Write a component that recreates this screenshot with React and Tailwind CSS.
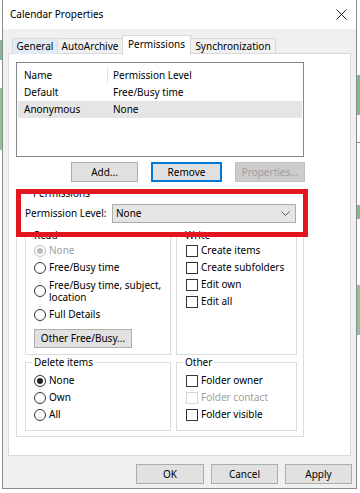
import React from 'react';

const Radio = ({ label, checked, disabled }) => (
    <div className="flex items-center h-[17px] pl-[8px]">
        <span
            className={`w-[12px] h-[12px] rounded-full border flex items-center justify-center bg-white ${disabled ? "border-[#bcbcbc]" : "border-[#333333]"}`}
        >
            {(checked || disabled) && (
                <span className={`w-[6px] h-[6px] rounded-full ${disabled ? "bg-[#bcbcbc]" : "bg-[#222222]"}`} />
            )}
        </span>
        <span className={`ml-[3px] ${disabled ? "text-[#a0a0a0]" : "text-black"}`}>{label}</span>
    </div>
);

const Check = ({ label, disabled }) => (
    <div className="flex items-center h-[17px] pl-[9px]">
        <span className={`w-[12px] h-[12px] border bg-white ${disabled ? "border-[#d6d6d6]" : "border-[#333333]"}`} />
        <span className={`ml-[3px] ${disabled ? "text-[#a0a0a0]" : "text-black"}`}>{label}</span>
    </div>
);

const Group = ({ title, className, children }) => (
    <fieldset className={`border border-[#dcdcdc] ${className}`}>
        <legend className="ml-[6px] px-[2px] leading-[14px]">{title}</legend>
        {children}
    </fieldset>
);

const Button = ({ label, width, focused, disabled }) => (
    <div
        className={`h-[20px] flex items-center justify-center ${width} ${
            focused
                ? "bg-[#e1e1e1] border-2 border-[#0078d7]"
                : disabled
                    ? "bg-[#cccccc] border border-[#bfbfbf] text-[#a0a0a0]"
                    : "bg-[#e1e1e1] border border-[#adadad]"
        }`}
    >
        {label}
    </div>
);

const SideStrip = ({ marks }) => (
    <div className="w-[3px] flex flex-col bg-white">
        {marks.map(([h, color], i) => (
            <div key={i} className={`${h} ${color}`} />
        ))}
    </div>
);

const App = () => {
    return (
        <div className="relative w-[360px] h-[493px] bg-white flex overflow-hidden font-['Noto_Sans',sans-serif] text-[10px] text-black">
            <SideStrip
                marks={[
                    ["h-[40px]", "bg-white"],
                    ["h-[20px]", "bg-[#7fb98f]"],
                    ["h-[28px]", "bg-white"],
                    ["h-[62px]", "bg-[#8fc39c]"],
                    ["h-[343px]", "bg-white"],
                ]}
            />

            {/* Dialog window */}
            <div className="w-[355px] h-[489px] -ml-px flex flex-col bg-[#f0f0f0] border-x border-b border-[#8c8c8c]">
                {/* Title bar */}
                <div className="h-[29px] bg-white flex items-center justify-between pl-[7px] pr-[8px] shrink-0">
                    <span className="text-[10px]">Calendar Properties</span>
                    <svg width="11" height="11" viewBox="0 0 11 11" className="mr-[1px]">
                        <path d="M0.5 0.5 L10.5 10.5 M10.5 0.5 L0.5 10.5" stroke="#222" strokeWidth="1" />
                    </svg>
                </div>

                <div className="pl-[5px] pr-[5px] pt-[6px]">
                    {/* Tabs */}
                    <div className="h-[19px] flex items-end pl-[4px]">
                        <div className="h-[16px] w-[45px] flex items-center justify-center bg-[#e3ecf6] border-t border-l border-[#d9d9d9]">
                            General
                        </div>
                        <div className="h-[16px] w-[65px] flex items-center justify-center border-t border-l border-[#d9d9d9]">
                            AutoArchive
                        </div>
                        <div className="relative z-10 h-[20px] w-[69px] -mb-px flex items-center justify-center bg-white border-t border-x border-[#d9d9d9] pb-[2px]">
                            Permissions
                        </div>
                        <div className="h-[16px] w-[85px] flex items-center justify-center border-t border-r border-[#d9d9d9]">
                            Synchronization
                        </div>
                    </div>

                    {/* Tab page */}
                    <div className="-mt-px h-[403px] bg-white border border-[#d9d9d9] pl-[7px] pt-[8px]">
                        {/* List */}
                        <div className="w-[288px] h-[95px] border border-[#828790] pt-[3px]">
                            <div className="h-[18px] flex items-center">
                                <div className="w-[90px] pl-[7px]">Name</div>
                                <div className="w-px h-[18px] bg-[#e5e5e5]" />
                                <div className="pl-[5px]">Permission Level</div>
                            </div>
                            <div className="h-[17px] flex items-center mx-px">
                                <div className="w-[89px] pl-[6px]">Default</div>
                                <div className="pl-[6px]">Free/Busy time</div>
                            </div>
                            <div className="h-[17px] flex items-center mx-px bg-[#e5e5e5]">
                                <div className="w-[89px] pl-[6px]">Anonymous</div>
                                <div className="pl-[6px]">None</div>
                            </div>
                        </div>

                        {/* List buttons */}
                        <div className="flex mt-[5px] pl-[55px] gap-[13px]">
                            <Button label="Add..." width="w-[67px]" />
                            <Button label="Remove" width="w-[71px]" focused />
                            <Button label="Properties..." width="w-[70px]" disabled />
                        </div>

                        {/* Permissions group */}
                        <Group title="Permissions" className="w-[288px] mt-[4px] pl-[8px] pb-[5px]">
                            <div className="flex items-center mt-[4px]">
                                <span className="w-[87px]">Permission Level:</span>
                                <div className="w-[184px] h-[19px] bg-[#e5e5e5] border border-[#acacac] flex items-center justify-between pl-[3px] pr-[5px]">
                                    <span>None</span>
                                    <svg width="9" height="6" viewBox="0 0 9 6">
                                        <path d="M0.5 0.5 L4.5 4.5 L8.5 0.5" stroke="#555" fill="none" strokeWidth="1" />
                                    </svg>
                                </div>
                            </div>

                            <div className="flex gap-[5px] mt-[5px]">
                                <Group title="Read" className="w-[146px] h-[127px]">
                                    <Radio label="None" disabled />
                                    <Radio label="Free/Busy time" />
                                    <div className="flex items-center h-[30px] pl-[8px]">
                                        <span className="w-[12px] h-[12px] rounded-full border border-[#333333] bg-white shrink-0" />
                                        <span className="ml-[3px] leading-[12px]">
                                            Free/Busy time, subject,
                                            <br />
                                            location
                                        </span>
                                    </div>
                                    <Radio label="Full Details" />
                                    <div className="mt-[6px] ml-[8px] w-[98px] h-[19px] flex items-center justify-center bg-[#e1e1e1] border border-[#adadad]">
                                        Other Free/Busy...
                                    </div>
                                </Group>
                                <Group title="Write" className="w-[121px] h-[127px]">
                                    <Check label="Create items" />
                                    <Check label="Create subfolders" />
                                    <Check label="Edit own" />
                                    <Check label="Edit all" />
                                </Group>
                            </div>

                            <div className="flex gap-[5px]">
                                <Group title="Delete items" className="w-[146px] h-[76px] pt-[3px]">
                                    <Radio label="None" checked />
                                    <Radio label="Own" />
                                    <Radio label="All" />
                                </Group>
                                <Group title="Other" className="w-[121px] h-[76px] pt-[3px]">
                                    <Check label="Folder owner" />
                                    <Check label="Folder contact" disabled />
                                    <Check label="Folder visible" />
                                </Group>
                            </div>
                        </Group>
                    </div>
                </div>

                {/* Dialog buttons */}
                <div className="flex justify-end gap-[7px] pr-[4px] mt-[8px]">
                    <Button label="OK" width="w-[68px]" />
                    <Button label="Cancel" width="w-[67px]" />
                    <Button label="Apply" width="w-[67px]" />
                </div>
            </div>

            <SideStrip
                marks={[
                    ["h-[75px]", "bg-white"],
                    ["h-[40px]", "bg-[#7fb98f]"],
                    ["h-[27px]", "bg-white"],
                    ["h-[1px]", "bg-[#4a90d9]"],
                    ["h-[62px]", "bg-white"],
                    ["h-[14px]", "bg-[#7fb98f]"],
                    ["h-[66px]", "bg-white"],
                    ["h-[50px]", "bg-[#8fc39c]"],
                    ["h-[158px]", "bg-white"],
                ]}
            />

            {/* Red annotation box */}
            <div className="absolute left-[16px] top-[189px] w-[292px] h-[48px] border-[5px] border-[#e3161f]" />
        </div>
    );
};

export default App;
